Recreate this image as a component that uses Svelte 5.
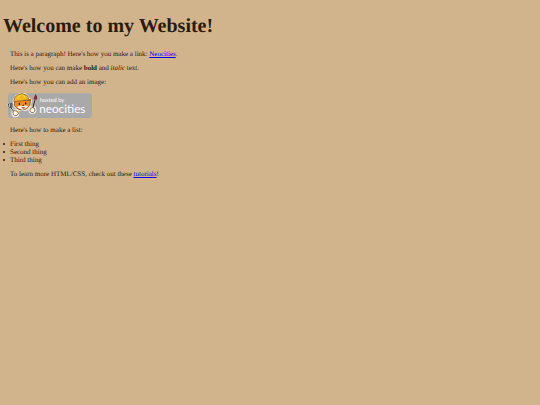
<script>
    const things = ["First thing", "Second thing", "Third thing"];
</script>

<main>
    <h1>Welcome to my Website!</h1>

    <p>This is a paragraph! Here's how you make a link: <a href="#neocities">Neocities</a>.</p>

    <p>Here's how you can make <strong>bold</strong> and <em>italic</em> text.</p>

    <p>Here's how you can add an image:</p>

    <svg class="badge" viewBox="0 0 258 84" role="img" aria-label="hosted by neocities">
        <rect x="3" y="4" width="252" height="74" rx="10" fill="#a9a9a9" />

        <!-- white sticker outline -->
        <g fill="#f4efe8" stroke="#f4efe8" stroke-width="6" stroke-linejoin="round" stroke-linecap="round">
            <path d="M20 26 L28 12 L41 6 L55 7 L64 18 L72 25 L68 44 L56 54 L34 53 L22 42 Z" />
            <path d="M5 38 L20 58 M87 11 L78 48" />
            <circle cx="25" cy="64" r="9" />
            <circle cx="76" cy="54" r="9" />
        </g>

        <g transform="translate(-4 -1)">
            <!-- cat head -->
            <path d="M27 28 L26 41 L36 52 L49 55 L62 52 L72 42 L75 24 L64 26 L38 26 Z" fill="#ee8a28" stroke="#5c3418" stroke-width="2" />
            <path d="M34 46 Q42 41 51 43 Q60 40 68 44 Q63 52 51 54 Q40 53 34 46 Z" fill="#fff4df" />
            <!-- helmet -->
            <path d="M25 27 Q28 10 42 8 Q48 3 55 8 Q67 9 69 23 L76 26 Q61 23 48 28 Q35 27 25 31 Z" fill="#f2b51d" stroke="#7a5010" stroke-width="2" />
            <path d="M35 20 Q37 13 45 11 M49 10 Q57 11 59 20" fill="none" stroke="#ffdc55" stroke-width="3" />
            <!-- face -->
            <ellipse cx="41" cy="37" rx="2" ry="4" fill="#26201e" />
            <ellipse cx="60" cy="35" rx="2" ry="4" fill="#26201e" />
            <path d="M49 40 L55 39 L53 44 Z" fill="#26201e" />
            <path d="M47 46 Q53 48 58 45 L56 50 Q52 52 49 49 Z" fill="#b52d31" />
        </g>

        <!-- fork and paint brush -->
        <path d="M4 35 L6 44 Q8 49 13 47 Q17 45 14 33 M9 33 L11 46 L21 60" fill="none" stroke="#44494c" stroke-width="3" />
        <path d="M84 24 L77 50" stroke="#492719" stroke-width="4" />
        <path d="M81 21 L86 8 Q91 14 88 22 Z" fill="#c1212b" stroke="#6f2328" stroke-width="3" />

        <!-- paws -->
        <path d="M18 61 Q17 54 25 56 Q34 57 35 64 Q32 72 23 71 Q17 68 18 61 Z" fill="#fff8eb" stroke="#5c3418" stroke-width="2" />
        <path d="M70 49 Q78 44 83 50 Q86 58 79 62 Q71 63 69 57 Z" fill="#fff8eb" stroke="#5c3418" stroke-width="2" />
        <path d="M27 57 L34 62 M70 50 L75 47" stroke="#ee9230" stroke-width="3" />

        <text class="hosted" x="98" y="30">hosted by</text>
        <text class="name" x="97" y="62">neocities</text>
    </svg>

    <p>Here's how to make a list:</p>

    <ul>
        {#each things as thing}
            <li>{thing}</li>
        {/each}
    </ul>

    <p>To learn more HTML/CSS, check out these <a href="#tutorials">tutorials</a>!</p>
</main>

<style>
    :global(body) {
        background-color: #d2b48c;
    }

    main {
        display: flow-root;
        padding: 0 3px;
        color: #2b1b0e;
        font-family: "Liberation Serif", "Times New Roman", serif;
        font-size: 7px;
        line-height: 8px;
        text-rendering: geometricPrecision;
    }

    h1 {
        margin: 15px 0 13px;
        font-size: 20px;
        line-height: 22px;
    }

    p {
        margin: 6px 7px;
    }

    a {
        color: #0000ee;
    }

    .badge {
        display: block;
        width: 86px;
        height: 28px;
        margin: 5px 4px;
    }

    .badge text {
        fill: #ffffff;
        font-family: Lato, sans-serif;
    }

    .badge .hosted {
        font-size: 17px;
    }

    .badge .name {
        font-size: 35px;
    }

    ul {
        margin: 6px 0;
        padding: 0;
        list-style: none;
    }

    li {
        display: flex;
        align-items: center;
        gap: 5px;
    }

    li::before {
        content: "";
        width: 2px;
        height: 2px;
        border-radius: 50%;
        background-color: #2b1b0e;
    }
</style>
